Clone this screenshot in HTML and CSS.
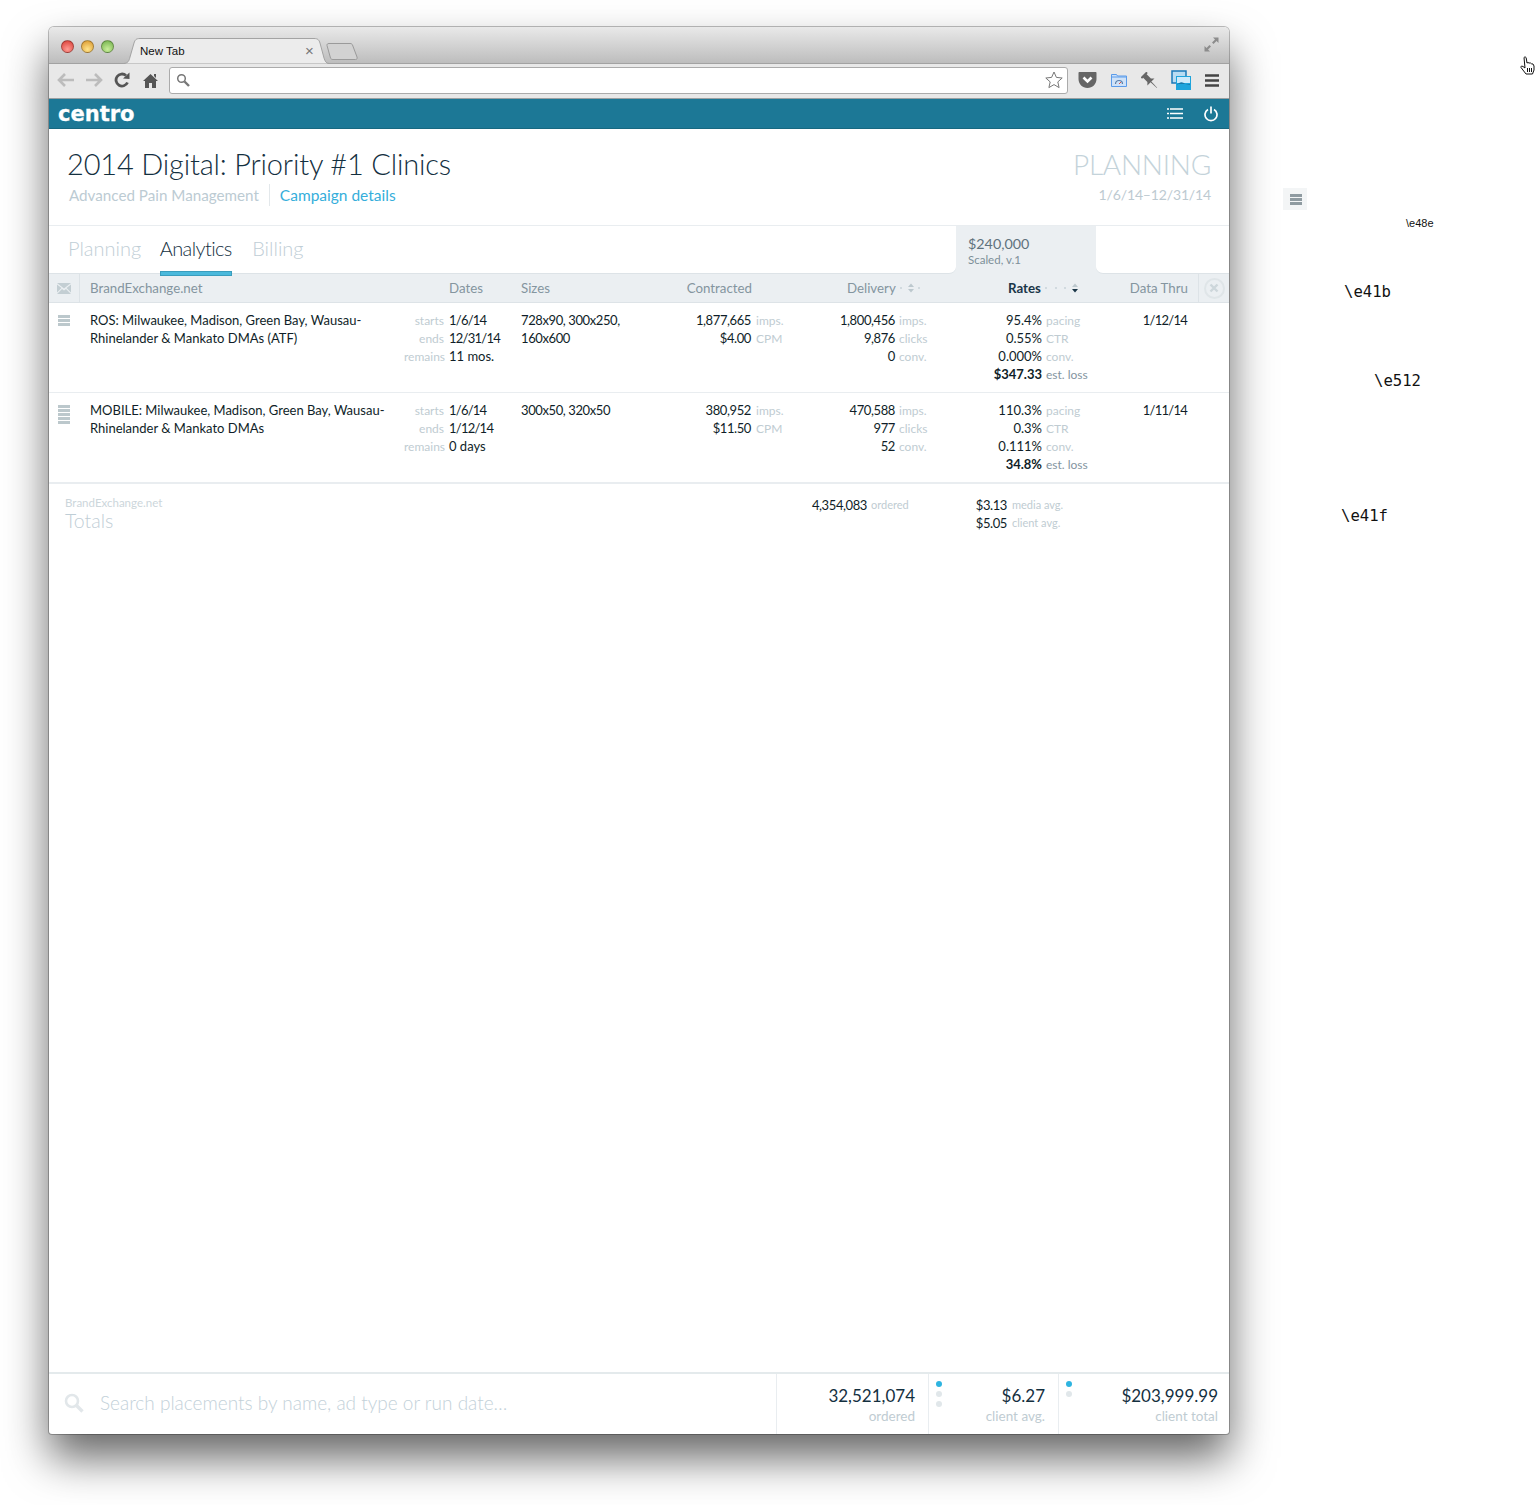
FILE: index.html
```html
<!DOCTYPE html>
<html lang="en">
    <head>
        <meta charset="UTF-8">
        <title>New Tab</title>
        <link rel="stylesheet" href="styles.css">
    </head>
    <body>
        <div class="window">
            <div class="titlebar">
                <span class="light light-red"></span>
                <span class="light light-yellow"></span>
                <span class="light light-green"></span>
                <div class="tab">
                    <svg class="tab-shape" width="206" height="26" viewBox="0 0 206 26"><path d="M0 25.500C5 25.500 6 23 7 19L11 5C12 2 13 .5 17 .5H191C195 .5 196 2 197 5L201 20C202 23 203 25.500 206 25.500" fill="#ececec" stroke="#a3a3a3"/></svg>
                    <span class="tab-title">New Tab</span>
                    <span class="tab-close">×</span>
                </div>
                <svg class="new-tab" width="32" height="17" viewBox="0 0 32 17"><path d="M1 2.500C.8 1.200 1.500.5 3 .5H24C25.500.5 26 1 26.500 2L31 14C31.500 15.500 31 16.500 29.500 16.500H7C5.500 16.500 5 16 4.500 15Z" fill="#d2d2d2" stroke="#9a9a9a"/></svg>
                <svg class="fullscreen" width="15" height="15" viewBox="0 0 15 15"><path d="M9 .5h5.500V6L12.500 4 9.500 7 8 5.500 11 2.500ZM6 14.500H.5V9L2.500 11 5.500 8 7 9.500 4 12.500Z" fill="#8c8c8c"/></svg>
            </div>
            <div class="toolbar">
                <span class="tool"><svg width="18" height="14" viewBox="0 0 18 14"><path d="M8 1 2 7l6 6M2 7h15" fill="none" stroke="#bcbcbc" stroke-width="2.600"/></svg></span>
                <span class="tool"><svg width="18" height="14" viewBox="0 0 18 14"><path d="m10 1 6 6-6 6M16 7H1" fill="none" stroke="#bcbcbc" stroke-width="2.600"/></svg></span>
                <span class="tool"><svg width="16" height="16" viewBox="0 0 16 16"><path d="M13.500 10.500A6 6 0 1 1 12 3.500" fill="none" stroke="#555" stroke-width="2.800"/><path d="M9 6.500 15.500 7V.5Z" fill="#555"/></svg></span>
                <span class="tool"><svg width="15" height="15" viewBox="0 0 15 15"><path d="M7.500 1 15 8h-2v7H9V10H6v5H2V8H0Z M11 1h2v4l-2-2Z" fill="#555"/></svg></span>
                <div class="url">
                    <svg width="14" height="14" viewBox="0 0 14 14"><circle cx="5.500" cy="5.500" r="3.800" fill="none" stroke="#777" stroke-width="1.500"/><path d="m8.500 8.500 4.500 4.500" stroke="#777" stroke-width="2.400"/></svg>
                    <svg class="url-star" width="18" height="18" viewBox="0 0 18 18"><path d="m9 1 2.400 5.400 5.800.6-4.400 3.900 1.300 5.700L9 13.600l-5.100 3 1.300-5.700L.8 7l5.800-.6Z" fill="#fff" stroke="#777"/></svg>
                </div>
                <span class="ext"><svg width="19" height="18" viewBox="0 0 19 18"><path d="M1 1h17a1 1 0 0 1 .5 1v6c0 5-4 9-9 9s-9-4-9-9V2a1 1 0 0 1 .5-1Z" fill="#666"/><path d="m5.500 6.500 4 4 4-4" fill="none" stroke="#fff" stroke-width="2.600"/></svg></span>
                <span class="ext"><svg width="16" height="14" viewBox="0 0 16 14"><path d="M.5 1.500h5l1 1.500h9v10.500H.5Z" fill="#cfe2f8" stroke="#5a9bea"/><path d="M1 4h14" stroke="#5a9bea"/><path d="M4.500 11a3.500 3.500 0 0 1 7 0" fill="none" stroke="#5a7fa8" stroke-width="1.200"/><path d="m8 11 2-2" stroke="#d9534f"/></svg></span>
                <span class="ext"><svg width="17" height="17" viewBox="0 0 17 17"><g transform="rotate(-45 8.500 8.500)" fill="#666"><path d="M4.500 0h8v2h-1.500v6l2.500 2.500h-10L6 8V2H4.500Z"/><path d="M8 10.500h1.200L8.800 19h-.4Z"/></g></svg></span>
                <span class="ext"><svg width="20" height="20" viewBox="0 0 20 20"><path d="M1 1h14v12H1Z" fill="#b9dcf2" stroke="#1b78b8" stroke-width="1.500"/><path d="M5 6h15v14H5Z" fill="#1ea4dc"/><path d="M6 7h13v6H6Z" fill="#cfeafa"/><path d="M6 15c3-4 6-3 8-1l5 1v-1H6Z" fill="#1678ab"/></svg></span>
                <span class="ext"><svg width="14" height="13" viewBox="0 0 14 13"><path d="M0 1.500h14M0 6.500h14M0 11.500h14" stroke="#444" stroke-width="2.600"/></svg></span>
            </div>
            <div class="appbar">
                <span class="logo">centro</span>
                <div class="appbar-icons">
                    <svg width="16" height="11" viewBox="0 0 16 11"><path d="M3 1h13M3 5.500h13M3 10h13M0 1h2M0 5.500h2M0 10h2" stroke="#fff" stroke-width="1.600"/></svg>
                    <svg width="14" height="16" viewBox="0 0 14 16"><path d="M4 3.500a6 6 0 1 0 6 0M7 .5v7" fill="none" stroke="#fff" stroke-width="1.700"/></svg>
                </div>
            </div>

            <div class="page-head">
                <div>
                    <h1 class="title">2014 Digital: Priority #1 Clinics</h1>
                    <div class="subtitle">
                        <span class="client">Advanced Pain Management</span>
                        <a class="details">Campaign details</a>
                    </div>
                </div>
                <div class="status">
                    <div class="status-name">PLANNING</div>
                    <div class="status-dates">1/6/14–12/31/14</div>
                </div>
            </div>

            <div class="tabbar">
                <div class="tabs">
                    <a class="tab-link">Planning</a>
                    <a class="tab-link active">Analytics</a>
                    <a class="tab-link">Billing</a>
                </div>
                <div class="budget">
                    <div class="budget-sum">$240,000</div>
                    <div class="budget-note">Scaled, v.1</div>
                </div>
                <div class="tabbar-end"></div>
            </div>

            <div class="cols thead">
                <div class="th-icon"><svg width="14" height="11" viewBox="0 0 14 11"><path d="M0 0h14L7 5.500ZM0 1.500v8l4.500-4.500ZM14 1.500v8L9.500 5ZM0 11l5-5 2 1.500L9 6l5 5Z" fill="#c3ced3"/></svg></div>
                <div class="th th-name">BrandExchange.net</div>
                <div class="th th-dates">Dates</div>
                <div class="th">Sizes</div>
                <div class="th th-right th-contracted">Contracted</div>
                <div class="th th-sort th-delivery">
                    <span>Delivery</span>
                    <svg class="sort" width="22" height="10" viewBox="0 0 22 10"><circle cx="1" cy="5" r="1" fill="#c9d3d8"/><path d="m8 4 3-3.500L14 4ZM8 6h6L11 9.500Z" fill="#bcc8ce"/><circle cx="19" cy="5" r="1" fill="#c9d3d8"/></svg>
                </div>
                <div class="th th-sort th-rates">
                    <span class="sorted">Rates</span>
                    <svg class="sort" width="34" height="10" viewBox="0 0 34 10"><circle cx="1" cy="5" r="1" fill="#c9d3d8"/><circle cx="11" cy="5" r="1" fill="#c9d3d8"/><circle cx="20" cy="5" r="1" fill="#c9d3d8"/><path d="m27 4 3-3.500L33 4Z" fill="#bcc8ce"/><path d="M27 6h6L30 9.500Z" fill="#1a3648"/></svg>
                </div>
                <div class="th th-thru">Data Thru</div>
                <div class="th-close"><span class="close-btn"><svg width="10" height="10" viewBox="0 0 10 10"><path d="m1.500 1.500 7 7M8.500 1.500l-7 7" stroke="#cdd7db" stroke-width="2.400"/></svg></span></div>
            </div>

            <div class="cols row">
                <div class="handle"><i></i><i></i><i></i></div>
                <div class="name">ROS: Milwaukee, Madison, Green Bay, Wausau-<br>Rhinelander &amp; Mankato DMAs (ATF)</div>
                <div class="pairs pairs-dates">
                    <span class="unit">starts</span><span class="date">1/6/14</span>
                    <span class="unit">ends</span><span class="date">12/31/14</span>
                    <span class="unit">remains</span><span>11 mos.</span>
                </div>
                <div class="sizes">728x90, 300x250,<br>160x600</div>
                <div class="pairs pairs-contracted">
                    <span>1,877,665</span><span class="unit">imps.</span>
                    <span>$4.00</span><span class="unit">CPM</span>
                </div>
                <div class="pairs pairs-delivery">
                    <span>1,800,456</span><span class="unit">imps.</span>
                    <span>9,876</span><span class="unit">clicks</span>
                    <span>0</span><span class="unit">conv.</span>
                </div>
                <div class="pairs pairs-rates">
                    <span>95.4%</span><span class="unit">pacing</span>
                    <span>0.55%</span><span class="unit">CTR</span>
                    <span>0.000%</span><span class="unit">conv.</span>
                    <b>$347.33</b><span class="unit unit-dark">est. loss</span>
                </div>
                <div class="thru date">1/12/14</div>
            </div>

            <div class="cols row row-last">
                <div class="handle"><i></i><i></i><i></i><i></i><i></i></div>
                <div class="name">MOBILE: Milwaukee, Madison, Green Bay, Wausau-<br>Rhinelander &amp; Mankato DMAs</div>
                <div class="pairs pairs-dates">
                    <span class="unit">starts</span><span class="date">1/6/14</span>
                    <span class="unit">ends</span><span class="date">1/12/14</span>
                    <span class="unit">remains</span><span>0 days</span>
                </div>
                <div class="sizes">300x50, 320x50</div>
                <div class="pairs pairs-contracted">
                    <span>380,952</span><span class="unit">imps.</span>
                    <span>$11.50</span><span class="unit">CPM</span>
                </div>
                <div class="pairs pairs-delivery">
                    <span>470,588</span><span class="unit">imps.</span>
                    <span>977</span><span class="unit">clicks</span>
                    <span>52</span><span class="unit">conv.</span>
                </div>
                <div class="pairs pairs-rates">
                    <span>110.3%</span><span class="unit">pacing</span>
                    <span>0.3%</span><span class="unit">CTR</span>
                    <span>0.111%</span><span class="unit">conv.</span>
                    <b>34.8%</b><span class="unit unit-dark">est. loss</span>
                </div>
                <div class="thru date">1/11/14</div>
            </div>

            <div class="totals">
                <div class="totals-label">
                    <div class="totals-brand">BrandExchange.net</div>
                    <div class="totals-word">Totals</div>
                </div>
                <div class="pairs pairs-ordered">
                    <span>4,354,083</span><span class="unit">ordered</span>
                </div>
                <div class="pairs pairs-avg">
                    <span>$3.13</span><span class="unit">media avg.</span>
                    <span>$5.05</span><span class="unit">client avg.</span>
                </div>
            </div>

            <div class="footer">
                <div class="search">
                    <svg width="20" height="20" viewBox="0 0 20 20"><circle cx="8" cy="8" r="6" fill="none" stroke="#e2e7ea" stroke-width="2.600"/><path d="m12.500 12.500 6 6" stroke="#e2e7ea" stroke-width="3.400"/></svg>
                    <span class="search-hint">Search placements by name, ad type or run date…</span>
                </div>
                <div class="stat stat-ordered">
                    <div class="stat-text"><div class="stat-num">32,521,074</div><div class="stat-name">ordered</div></div>
                </div>
                <div class="stat stat-avg">
                    <div class="dots"><i class="on"></i><i></i><i></i></div>
                    <div class="stat-text"><div class="stat-num">$6.27</div><div class="stat-name">client avg.</div></div>
                </div>
                <div class="stat stat-total">
                    <div class="dots"><i class="on"></i><i></i></div>
                    <div class="stat-text"><div class="stat-num">$203,999.99</div><div class="stat-name">client total</div></div>
                </div>
            </div>
        </div>

        <!-- stray bits outside the browser window -->
        <svg class="cursor" width="16" height="20" viewBox="0 0 16 20"><path d="M4 1.500c1-1 2-.5 2.200.5l.8 5 1-.5 1 .5 1.500 0 1 .8 1.500.2 1 2v4l-1.500 4H6L1 11.500c-.5-1 .5-2 2-1l2 1.500Z" fill="#fff" stroke="#111"/><path d="M7.500 12v4M9.500 12v4M11.500 12v4" stroke="#111"/></svg>
        <div class="sidebtn"><svg width="12" height="11" viewBox="0 0 12 11"><path d="M0 1.500h12M0 5.500h12M0 9.500h12" stroke="#8f9ba1" stroke-width="3"/></svg></div>
        <span class="note note-small note-a">\e48e</span>
        <span class="note note-b">\e41b</span>
        <span class="note note-c">\e512</span>
        <span class="note note-d">\e41f</span>
    </body>
</html>
```

FILE: styles.css
```css
html, body {
    margin: 0;
    padding: 0;
}
body {
    position: relative;
    height: 1505px;
    overflow: hidden;
    box-sizing: border-box;
    padding: 27px 0 0 49px;
    background-color: #fff;
    font-family: Lato, "Noto Sans", sans-serif;
    font-size: 13px;
    line-height: 18px;
    color: #0f1e28;
}
.window {
    width: 1180px;
    height: 1407px;
    display: flex;
    flex-direction: column;
    background-color: #fff;
    border-radius: 5px 5px 3px 3px;
    box-shadow: 0 0 0 1px rgba(0, 0, 0, .25), 0 24px 44px rgba(0, 0, 0, .6);
}

/* browser chrome */
.titlebar {
    height: 36px;
    flex: none;
    display: flex;
    align-items: flex-start;
    box-sizing: border-box;
    padding-left: 12px;
    background: linear-gradient(#e9e9e9, #bdbdbd);
    border-radius: 5px 5px 0 0;
}
.light {
    width: 13px;
    height: 13px;
    flex: none;
    margin: 13px 7px 0 0;
    border-radius: 50%;
    box-sizing: border-box;
    border: 1px solid rgba(0, 0, 0, .3);
}
.light-red {
    background: radial-gradient(circle at 50% 75%, #ff9a92, #d83a32);
}
.light-yellow {
    background: radial-gradient(circle at 50% 75%, #ffe48a, #d9952a);
}
.light-green {
    background: radial-gradient(circle at 50% 75%, #c9ee9a, #6eae48);
}
.tab {
    position: relative;
    width: 206px;
    height: 26px;
    flex: none;
    margin: 11px 0 0 2px;
}
.tab-shape {
    position: absolute;
    left: 0;
    top: 0;
}
.tab-title {
    position: absolute;
    left: 17px;
    top: 4px;
    font-family: "Liberation Sans", sans-serif;
    font-size: 11.500px;
    color: #111;
}
.tab-close {
    position: absolute;
    left: 182px;
    top: 4px;
    font-family: "Liberation Sans", sans-serif;
    font-size: 15px;
    color: #777;
}
.new-tab {
    flex: none;
    margin: 16px 0 0 -3px;
}
.fullscreen {
    margin: 10px 10px 0 auto;
}
.toolbar {
    height: 36px;
    flex: none;
    display: flex;
    align-items: center;
    box-sizing: border-box;
    padding: 0 2px 2px 3px;
    background-color: #e8e8e8;
    border-top: 1px solid #a2a2a2;
    border-bottom: 1px solid #9aa0a2;
}
.tool {
    width: 28px;
    display: flex;
    justify-content: center;
    flex: none;
}
.url {
    flex: 1;
    height: 27px;
    display: flex;
    align-items: center;
    justify-content: space-between;
    box-sizing: border-box;
    margin: 0 4px 0 5px;
    padding: 0 4px 0 6px;
    background-color: #fff;
    border: 1px solid #ababab;
    border-radius: 3px;
}
.ext {
    width: 31px;
    display: flex;
    justify-content: center;
    flex: none;
}

/* app */
.appbar {
    height: 30px;
    flex: none;
    display: flex;
    align-items: center;
    justify-content: space-between;
    box-sizing: border-box;
    padding: 0 11px 0 9px;
    background-color: #1c7896;
    border-bottom: 1px solid #176880;
}
.logo {
    font-family: "DejaVu Sans", sans-serif;
    font-weight: bold;
    font-size: 21px;
    color: #fff;
    -webkit-text-stroke: .3px #fff;
}
.appbar-icons {
    display: flex;
    align-items: center;
    gap: 21px;
}
.page-head {
    height: 96px;
    flex: none;
    display: flex;
    justify-content: space-between;
    box-sizing: border-box;
    padding: 15px 18px 0;
}
.title {
    margin: 0;
    font-size: 29px;
    line-height: 40px;
    font-weight: 300;
    letter-spacing: -.18px;
    color: #14303f;
}
.subtitle {
    margin: 0 0 0 2px;
    display: flex;
    font-size: 15.200px;
    line-height: 22px;
}
.client {
    color: #bccbd3;
    padding-right: 10px;
    border-right: 1px solid #e3e8eb;
}
.details {
    color: #35aedb;
    margin-left: 10px;
    font-size: 15.500px;
}
.status {
    text-align: right;
}
.status-name {
    font-size: 28px;
    line-height: 40px;
    font-weight: 300;
    letter-spacing: -.25px;
    color: #c4d3da;
}
.status-dates {
    font-size: 14px;
    line-height: 22px;
    letter-spacing: -.15px;
    color: #bdcad1;
}
.tabbar {
    height: 49px;
    flex: none;
    display: flex;
    box-sizing: border-box;
    background-color: #ebeff2;
    border-top: 1px solid #e9edf0;
}
.tabs {
    flex: 1;
    display: flex;
    gap: 19.500px;
    box-sizing: border-box;
    padding: 8px 0 0 19px;
    background-color: #fff;
    border-bottom: 1px solid #dde3e7;
    border-bottom-right-radius: 7px;
}
.tab-link {
    position: relative;
    height: 28px;
    font-size: 20px;
    line-height: 28px;
    font-weight: 300;
    color: #bfced6;
}
.tab-link.active {
    margin: 0 1px 0 -1px;
    color: #14303f;
    letter-spacing: -.6px;
}
.tab-link.active::after {
    content: "";
    position: absolute;
    left: 0;
    right: 0;
    top: 37px;
    height: 3px;
    background-color: #4ab9dc;
    border: 1px solid #3a9dbd;
}
.budget {
    width: 140px;
    flex: none;
    box-sizing: border-box;
    padding: 8px 12px 0;
}
.budget-sum {
    font-size: 14.300px;
    line-height: 19px;
    color: #5f727d;
}
.budget-note {
    font-size: 11.500px;
    line-height: 14px;
    color: #7d8f99;
}
.tabbar-end {
    width: 133px;
    flex: none;
    background-color: #fff;
    border-bottom: 1px solid #dde3e7;
    border-bottom-left-radius: 7px;
}

/* placements table */
.cols {
    flex: none;
    display: grid;
    grid-template-columns: 31px 324px 117px 135px 134px 145px 160px 103px 31px;
}
.thead {
    height: 29px;
    box-sizing: border-box;
    align-items: center;
    background-color: #ebeff2;
    border-bottom: 1px solid #dde3e7;
}
.th {
    font-size: 13.300px;
    color: #84959f;
}
.th-icon {
    height: 100%;
    display: flex;
    align-items: center;
    justify-content: center;
    border-right: 1px solid #dde3e7;
    box-sizing: border-box;
}
.th-name {
    padding-left: 10px;
}
.th-dates {
    padding-left: 45px;
}
.th-contracted {
    text-align: right;
    padding-right: 38px;
}
.th-sort {
    display: flex;
    align-items: center;
    gap: 4px;
}
.th-delivery {
    padding-left: 57px;
    justify-content: flex-start;
}
.th-rates {
    padding-left: 73px;
}
.sorted {
    font-weight: bold;
    color: #1a3648;
}
.th-thru {
    text-align: right;
    padding-right: 10px;
}
.th-close {
    height: 100%;
    display: flex;
    align-items: center;
    justify-content: center;
    box-sizing: border-box;
    border-left: 1px solid #dde3e7;
}
.close-btn {
    width: 21px;
    height: 21px;
    display: flex;
    align-items: center;
    justify-content: center;
    box-sizing: border-box;
    border: 2px solid #dfe5e8;
    border-radius: 50%;
}
.row {
    height: 90px;
    box-sizing: border-box;
    padding-top: 8px;
    border-bottom: 1px solid #e9edf0;
    white-space: nowrap;
}
.row-last {
    height: 91px;
    border-bottom-width: 2px;
}
.handle {
    display: flex;
    flex-direction: column;
    gap: 1px;
    padding: 4px 0 0 9px;
}
.handle i {
    width: 12px;
    height: 3px;
    background-color: #bcc8cc;
}
.name {
    padding-left: 10px;
}
.sizes {
    white-space: nowrap;
    letter-spacing: -.4px;
}
.thru {
    text-align: right;
    padding-right: 11px;
}
.date {
    letter-spacing: -.75px;
}
.pairs {
    display: grid;
    align-content: start;
}
.pairs > :nth-child(odd) {
    text-align: right;
}
.pairs b {
    font-weight: bold;
}
.pairs-contracted span:not(.unit),
.pairs-delivery span:not(.unit),
.pairs-ordered span:not(.unit),
.pairs-avg span:not(.unit) {
    letter-spacing: -.4px;
}
.unit {
    height: 18px;
    font-size: 12px;
    line-height: 20px;
    color: #c0ccd2;
}
.unit-dark {
    color: #84959f;
}
.pairs-dates {
    grid-template-columns: 40px auto;
    column-gap: 5px;
}
.pairs-dates > :nth-child(even) {
    text-align: left;
}
.pairs-contracted {
    grid-template-columns: 95px auto;
    column-gap: 5px;
}
.pairs-delivery {
    grid-template-columns: 105px auto;
    column-gap: 4px;
}
.pairs-rates {
    grid-template-columns: 107px auto;
    column-gap: 4px;
}
.totals {
    flex: 1;
    display: grid;
    grid-template-columns: 700px 172px auto;
    align-content: start;
    padding: 12px 0 0 16px;
}
.totals .unit {
    font-size: 11px;
    line-height: 18px;
}
.totals-label {
    margin-top: -1px;
}
.totals-brand {
    font-size: 11.500px;
    line-height: 16px;
    color: #ccd6db;
}
.totals-word {
    font-size: 19.500px;
    line-height: 20px;
    font-weight: 300;
    color: #bfced6;
}
.pairs-ordered {
    grid-template-columns: 102px auto;
    column-gap: 4px;
}
.pairs-avg {
    grid-template-columns: 70px auto;
    column-gap: 5px;
}

/* footer */
.footer {
    height: 62px;
    flex: none;
    display: flex;
    box-sizing: border-box;
    border-top: 2px solid #e4eaec;
    white-space: nowrap;
}
.search {
    flex: 1;
    display: flex;
    align-items: center;
    gap: 16px;
    padding: 0 0 3px 15px;
}
.search-hint {
    font-size: 19px;
    font-weight: 300;
    color: #c3d1d9;
}
.stat {
    display: flex;
    justify-content: space-between;
    box-sizing: border-box;
    padding: 7px 13px 0 7px;
    border-left: 1px solid #e9edf0;
}
.stat-ordered {
    width: 152px;
    justify-content: flex-end;
}
.stat-avg {
    width: 130px;
}
.stat-total {
    width: 171px;
    padding-right: 11px;
}
.stat-text {
    text-align: right;
}
.stat-num {
    margin-top: 4px;
    font-size: 17px;
    line-height: 22px;
    color: #14303f;
}
.stat-name {
    margin-top: 1px;
    font-size: 13.500px;
    line-height: 16px;
    color: #c0ccd2;
}
.dots {
    display: flex;
    flex-direction: column;
    gap: 4px;
}
.dots i {
    width: 6px;
    height: 6px;
    border-radius: 50%;
    background-color: #e1e7ea;
}
.dots i.on {
    background-color: #2eb4e0;
}

/* things lying on the desktop around the window */
.cursor {
    position: absolute;
    left: 1520px;
    top: 56px;
}
.sidebtn {
    position: absolute;
    left: 1283px;
    top: 188px;
    width: 24px;
    height: 22px;
    display: flex;
    align-items: center;
    justify-content: center;
    box-sizing: border-box;
    padding-left: 2px;
    background-color: #f3f5f6;
}
.note {
    position: absolute;
    font-family: "DejaVu Sans Mono", monospace;
    font-size: 15.600px;
    color: #111;
}
.note-small {
    font-family: "Liberation Sans", sans-serif;
    font-size: 11px;
}
.note-a {
    left: 1406px;
    top: 214px;
}
.note-b {
    left: 1344px;
    top: 283px;
}
.note-c {
    left: 1374px;
    top: 372px;
}
.note-d {
    left: 1341px;
    top: 507px;
}
```
